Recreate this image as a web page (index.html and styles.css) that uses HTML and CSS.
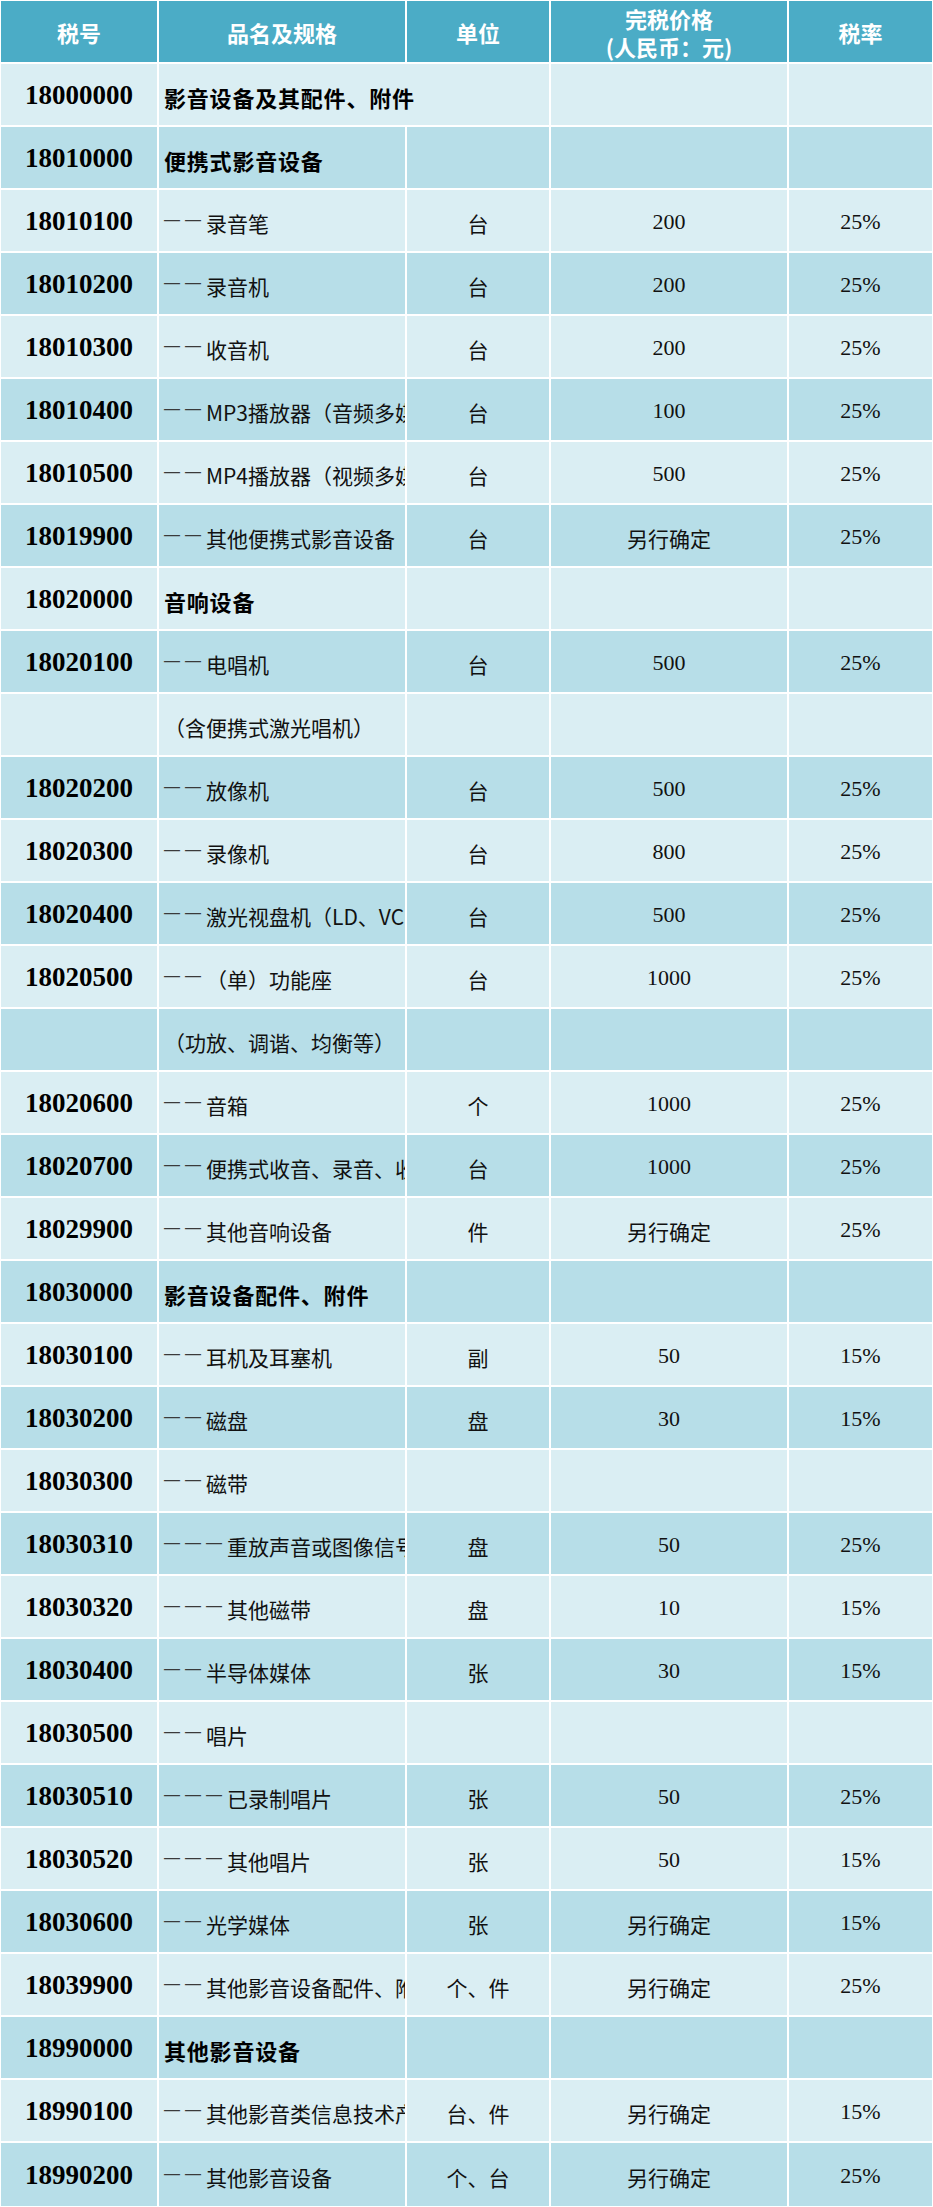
FILE: index.html
```html
<!DOCTYPE html>
<html lang="zh-CN">
<head>
<meta charset="utf-8">
<title>影音设备税号表</title>
<link rel="stylesheet" href="styles.css">
</head>
<body>
<div class="table">
  <div class="row head">
    <div class="cell">税号</div>
    <div class="cell">品名及规格</div>
    <div class="cell">单位</div>
    <div class="cell two">完税价格<br>(人民币：元)</div>
    <div class="cell">税率</div>
  </div>

  <div class="row light group"><div class="cell code">18000000</div><div class="cell name span2">影音设备及其配件、附件</div><div class="cell"></div><div class="cell"></div></div>
  <div class="row dark group"><div class="cell code">18010000</div><div class="cell name">便携式影音设备</div><div class="cell"></div><div class="cell"></div><div class="cell"></div></div>
  <div class="row light"><div class="cell code">18010100</div><div class="cell name"><span class="dash">——</span>录音笔</div><div class="cell unit">台</div><div class="cell num">200</div><div class="cell num">25%</div></div>
  <div class="row dark"><div class="cell code">18010200</div><div class="cell name"><span class="dash">——</span>录音机</div><div class="cell unit">台</div><div class="cell num">200</div><div class="cell num">25%</div></div>
  <div class="row light"><div class="cell code">18010300</div><div class="cell name"><span class="dash">——</span>收音机</div><div class="cell unit">台</div><div class="cell num">200</div><div class="cell num">25%</div></div>
  <div class="row dark"><div class="cell code">18010400</div><div class="cell name"><span class="dash">——</span>MP3播放器（音频多媒体播放器）</div><div class="cell unit">台</div><div class="cell num">100</div><div class="cell num">25%</div></div>
  <div class="row light"><div class="cell code">18010500</div><div class="cell name"><span class="dash">——</span>MP4播放器（视频多媒体播放器）</div><div class="cell unit">台</div><div class="cell num">500</div><div class="cell num">25%</div></div>
  <div class="row dark"><div class="cell code">18019900</div><div class="cell name"><span class="dash">——</span>其他便携式影音设备</div><div class="cell unit">台</div><div class="cell unit">另行确定</div><div class="cell num">25%</div></div>
  <div class="row light group"><div class="cell code">18020000</div><div class="cell name">音响设备</div><div class="cell"></div><div class="cell"></div><div class="cell"></div></div>
  <div class="row dark"><div class="cell code">18020100</div><div class="cell name"><span class="dash">——</span>电唱机</div><div class="cell unit">台</div><div class="cell num">500</div><div class="cell num">25%</div></div>
  <div class="row light"><div class="cell code"></div><div class="cell name">（含便携式激光唱机）</div><div class="cell"></div><div class="cell"></div><div class="cell"></div></div>
  <div class="row dark"><div class="cell code">18020200</div><div class="cell name"><span class="dash">——</span>放像机</div><div class="cell unit">台</div><div class="cell num">500</div><div class="cell num">25%</div></div>
  <div class="row light"><div class="cell code">18020300</div><div class="cell name"><span class="dash">——</span>录像机</div><div class="cell unit">台</div><div class="cell num">800</div><div class="cell num">25%</div></div>
  <div class="row dark"><div class="cell code">18020400</div><div class="cell name"><span class="dash">——</span>激光视盘机（LD、VCD、DVD等）</div><div class="cell unit">台</div><div class="cell num">500</div><div class="cell num">25%</div></div>
  <div class="row light"><div class="cell code">18020500</div><div class="cell name"><span class="dash">——</span>（单）功能座</div><div class="cell unit">台</div><div class="cell num">1000</div><div class="cell num">25%</div></div>
  <div class="row dark"><div class="cell code"></div><div class="cell name">（功放、调谐、均衡等）</div><div class="cell"></div><div class="cell"></div><div class="cell"></div></div>
  <div class="row light"><div class="cell code">18020600</div><div class="cell name"><span class="dash">——</span>音箱</div><div class="cell unit">个</div><div class="cell num">1000</div><div class="cell num">25%</div></div>
  <div class="row dark"><div class="cell code">18020700</div><div class="cell name"><span class="dash">——</span>便携式收音、录音、收录音机</div><div class="cell unit">台</div><div class="cell num">1000</div><div class="cell num">25%</div></div>
  <div class="row light"><div class="cell code">18029900</div><div class="cell name"><span class="dash">——</span>其他音响设备</div><div class="cell unit">件</div><div class="cell unit">另行确定</div><div class="cell num">25%</div></div>
  <div class="row dark group"><div class="cell code">18030000</div><div class="cell name">影音设备配件、附件</div><div class="cell"></div><div class="cell"></div><div class="cell"></div></div>
  <div class="row light"><div class="cell code">18030100</div><div class="cell name"><span class="dash">——</span>耳机及耳塞机</div><div class="cell unit">副</div><div class="cell num">50</div><div class="cell num">15%</div></div>
  <div class="row dark"><div class="cell code">18030200</div><div class="cell name"><span class="dash">——</span>磁盘</div><div class="cell unit">盘</div><div class="cell num">30</div><div class="cell num">15%</div></div>
  <div class="row light"><div class="cell code">18030300</div><div class="cell name"><span class="dash">——</span>磁带</div><div class="cell"></div><div class="cell"></div><div class="cell"></div></div>
  <div class="row dark"><div class="cell code">18030310</div><div class="cell name"><span class="dash">———</span>重放声音或图像信号的磁带</div><div class="cell unit">盘</div><div class="cell num">50</div><div class="cell num">25%</div></div>
  <div class="row light"><div class="cell code">18030320</div><div class="cell name"><span class="dash">———</span>其他磁带</div><div class="cell unit">盘</div><div class="cell num">10</div><div class="cell num">15%</div></div>
  <div class="row dark"><div class="cell code">18030400</div><div class="cell name"><span class="dash">——</span>半导体媒体</div><div class="cell unit">张</div><div class="cell num">30</div><div class="cell num">15%</div></div>
  <div class="row light"><div class="cell code">18030500</div><div class="cell name"><span class="dash">——</span>唱片</div><div class="cell"></div><div class="cell"></div><div class="cell"></div></div>
  <div class="row dark"><div class="cell code">18030510</div><div class="cell name"><span class="dash">———</span>已录制唱片</div><div class="cell unit">张</div><div class="cell num">50</div><div class="cell num">25%</div></div>
  <div class="row light"><div class="cell code">18030520</div><div class="cell name"><span class="dash">———</span>其他唱片</div><div class="cell unit">张</div><div class="cell num">50</div><div class="cell num">15%</div></div>
  <div class="row dark"><div class="cell code">18030600</div><div class="cell name"><span class="dash">——</span>光学媒体</div><div class="cell unit">张</div><div class="cell unit">另行确定</div><div class="cell num">15%</div></div>
  <div class="row light"><div class="cell code">18039900</div><div class="cell name"><span class="dash">——</span>其他影音设备配件、附件</div><div class="cell unit">个、件</div><div class="cell unit">另行确定</div><div class="cell num">25%</div></div>
  <div class="row dark group"><div class="cell code">18990000</div><div class="cell name">其他影音设备</div><div class="cell"></div><div class="cell"></div><div class="cell"></div></div>
  <div class="row light"><div class="cell code">18990100</div><div class="cell name"><span class="dash">——</span>其他影音类信息技术产品</div><div class="cell unit">台、件</div><div class="cell unit">另行确定</div><div class="cell num">15%</div></div>
  <div class="row dark last"><div class="cell code">18990200</div><div class="cell name"><span class="dash">——</span>其他影音设备</div><div class="cell unit">个、台</div><div class="cell unit">另行确定</div><div class="cell num">25%</div></div>
</div>
</body>
</html>
```

FILE: styles.css
```css
html {
  background: #ffffff;
}

body {
  margin: 0;
  font-family: "Noto Sans CJK SC", "Noto Sans", sans-serif;
  color: #000000;
}

.table {
  width: 933px;
  box-sizing: border-box;
  padding: 1px 1px 0 1px;
  background: #ffffff;
  display: flex;
  flex-direction: column;
  gap: 2px;
}

.row {
  display: grid;
  grid-template-columns: 156px 246px 142px 236px 143px;
  column-gap: 2px;
  height: 61px;
  background: #ffffff;
}

.row.last {
  height: 63px;
}

.cell {
  display: flex;
  align-items: center;
  justify-content: center;
  overflow: hidden;
  white-space: nowrap;
  font-size: 21px;
}

.head .cell {
  background: #4bacc6;
  color: #ffffff;
  font-weight: 700;
  font-size: 22px;
  text-align: center;
}

.head .cell.two {
  line-height: 28px;
  padding-top: 1px;
}

.light .cell {
  background: #daeef3;
}

.dark .cell {
  background: #b7dee8;
}

.cell.code {
  font-family: "Liberation Serif", "Times New Roman", serif;
  font-weight: 700;
  font-size: 27px;
  padding-top: 2px;
}

.cell.name {
  justify-content: flex-start;
  padding-left: 5px;
  padding-top: 4px;
  color: #111111;
}

.dash {
  font-family: "Liberation Sans", Arial, sans-serif;
  font-size: 16px;
  letter-spacing: 5px;
  color: #3a3a3a;
  position: relative;
  top: -3px;
}

.group .cell.name {
  font-weight: 700;
  font-size: 22px;
  letter-spacing: 0.8px;
  color: #000000;
}

.cell.span2 {
  grid-column: span 2;
}

.cell.unit {
  padding-top: 4px;
  color: #111111;
}

.cell.num {
  font-family: "Liberation Serif", "Times New Roman", serif;
  font-size: 22px;
  padding-top: 2px;
  color: #111111;
}
```
